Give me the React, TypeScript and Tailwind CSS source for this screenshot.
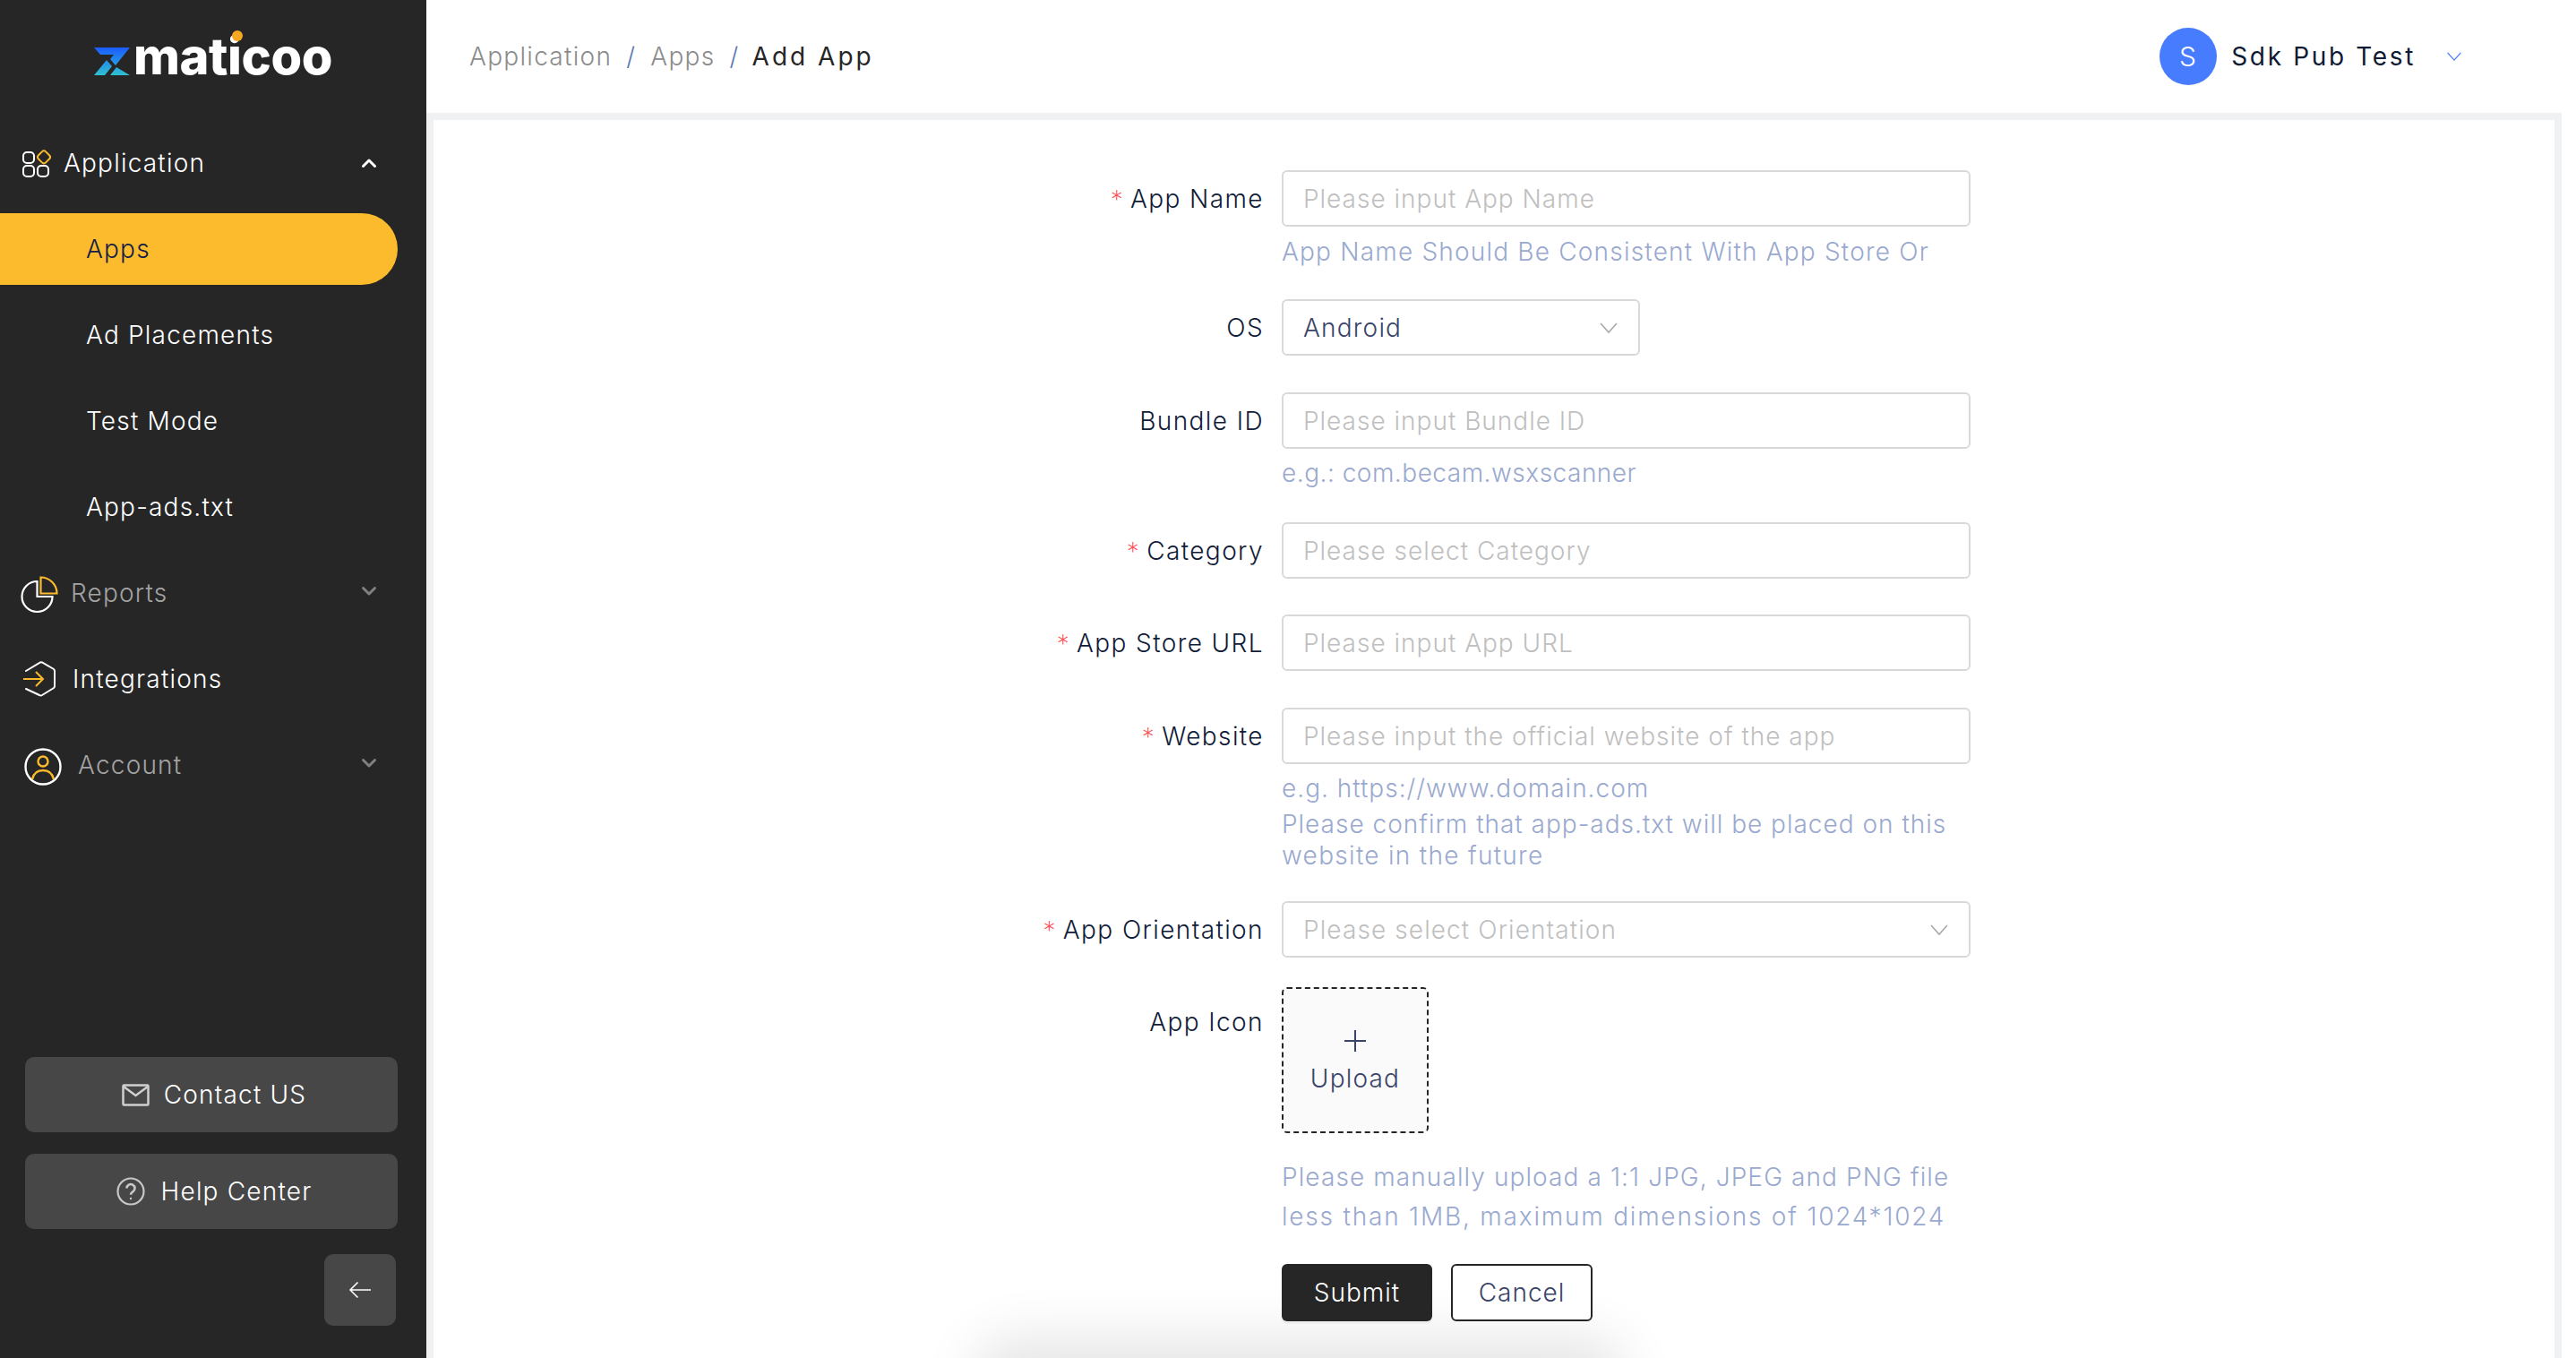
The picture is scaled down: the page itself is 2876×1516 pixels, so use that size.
import React from 'react'

const rowText = "text-[28px] tracking-[1.2px]"

function Chevron({ up, color }: { up?: boolean; color: string }) {
    return (
        <svg width="18" height="14" viewBox="0 0 18 14" fill="none" stroke={color} strokeWidth="3" strokeLinecap="round" strokeLinejoin="round">
            {up ? <path d="M2.5 10.5 9 4l6.5 6.5" /> : <path d="M2.5 3.5 9 10l6.5-6.5" />}
        </svg>
    )
}

function ThinChevron({ color, w = 22, h = 14 }: { color: string; w?: number; h?: number }) {
    return (
        <svg width={w} height={h} viewBox="0 0 22 14" fill="none" stroke={color} strokeWidth="1.6">
            <path d="M2 2l9 10 9-10" />
        </svg>
    )
}

function Logo() {
    return (
        <div className="h-[126px] flex items-center pl-[105px]">
            <svg width="40" height="31" viewBox="0 0 40 31" className="mt-[11px] shrink-0">
                <defs>
                    <linearGradient id="zg" x1="0" y1="0" x2="0" y2="1">
                        <stop offset="0" stopColor="#1a5cff" />
                        <stop offset="1" stopColor="#2fc0d0" />
                    </linearGradient>
                </defs>
                <path d="M0 0h40L24 20l-6-7 4-5H7zM0 31l14-17 6 7-8 10zM18 31l7-9 15 9z" fill="url(#zg)" />
            </svg>
            <div className="relative ml-[4px] text-[56px] leading-none font-extrabold tracking-[-0.4px] text-white">
                maticoo
                <span className="absolute left-[110px] top-[-1px] w-[12px] h-[12px] rounded-full bg-[#f7a823]" />
            </div>
        </div>
    )
}

function NavRow({ icon, label, dim, chevron, gap }: { icon: React.ReactNode; label: string; dim?: boolean; chevron?: 'up' | 'down'; gap: string }) {
    return (
        <div className="h-[96px] flex items-center relative">
            {icon}
            <span className={`${rowText} ${gap} ${dim ? 'text-[#a3a3a3]' : 'text-white'} font-light`}>{label}</span>
            {chevron && (
                <span className={`absolute left-[403px] ${chevron === 'up' ? 'top-[41px]' : 'top-[39px]'}`}>
                    <Chevron up={chevron === 'up'} color={chevron === 'up' ? '#ffffff' : '#808080'} />
                </span>
            )}
        </div>
    )
}

function SubRow({ label, active }: { label: string; active?: boolean }) {
    return (
        <div className={`h-[80px] mr-8 mb-4 pl-[96px] flex items-center rounded-r-[40px] font-light ${rowText} ${active ? 'bg-[#fbbb2c] text-[#141c47]' : 'text-white'}`}>
            {label}
        </div>
    )
}

function Sidebar() {
    return (
        <aside className="w-[476px] shrink-0 h-full bg-[#262626] flex flex-col">
            <Logo />
            <div className="h-[112px] flex flex-col justify-center">
                <NavRow
                    gap="ml-[14px]"
                    chevron="up"
                    label="Application"
                    icon={
                        <svg width="32" height="32" viewBox="0 0 32 32" fill="none" strokeWidth="2" className="ml-[25px] -mt-[1px]">
                            <rect x="1" y="4" width="12" height="12" rx="4" stroke="#fff" />
                            <rect x="1" y="19" width="12" height="12" rx="4" stroke="#fff" />
                            <rect x="17" y="19" width="12" height="12" rx="4" stroke="#fff" />
                            <rect x="18.5" y="3.5" width="11.5" height="11.5" rx="3" stroke="#fbbb2c" transform="rotate(45 24 9)" />
                        </svg>
                    }
                />
            </div>
            <SubRow label="Apps" active />
            <SubRow label="Ad Placements" />
            <SubRow label="Test Mode" />
            <SubRow label="App-ads.txt" />
            <div className="-mt-[8px]">
                <NavRow
                    gap="ml-[14px]"
                    dim
                    chevron="down"
                    label="Reports"
                    icon={
                        <svg width="42" height="42" viewBox="0 0 42 42" fill="none" strokeWidth="2.2" className="ml-[23px] mt-[4px]">
                            <path d="M18.500 6A17 17 0 1 0 35.500 23H18.500z" stroke="#fff" />
                            <path d="M22.500 1.500a18 18 0 0 1 18 18H22.500z" stroke="#fbbb2c" />
                        </svg>
                    }
                />
                <NavRow
                    gap="ml-[18px]"
                    label="Integrations"
                    icon={
                        <svg width="38" height="42" viewBox="0 0 38 42" fill="none" strokeWidth="2" className="ml-[25px]">
                            <path d="M4 12 20 2.5a3 3 0 0 1 2 0l13 7.5a3 3 0 0 1 1 2v17a3 3 0 0 1-1 2l-13 8a3 3 0 0 1-3 0L4 32" stroke="#fff" strokeLinecap="round" />
                            <path d="M1 21h21M15 13l8 8-8 8" stroke="#fbbb2c" />
                        </svg>
                    }
                />
                <NavRow
                    gap="ml-[18px]"
                    dim
                    chevron="down"
                    label="Account"
                    icon={
                        <svg width="42" height="42" viewBox="0 0 42 42" fill="none" strokeWidth="2.4" className="ml-[27px] mt-[3px]">
                            <circle cx="21" cy="21" r="19.5" stroke="#fff" />
                            <circle cx="21" cy="15" r="5.5" stroke="#fbbb2c" />
                            <path d="M9 35c1.5-7 6-10 12-10s10.500 3 12 10" stroke="#fbbb2c" />
                        </svg>
                    }
                />
            </div>
            <div className="mt-auto pl-7 pr-8 pb-9 flex flex-col">
                <button className="h-[84px] pl-[6px] rounded-[10px] bg-[#474747] flex items-center justify-center gap-[16px] text-white font-light text-[28px] tracking-[1.2px]">
                    <svg width="31" height="25" viewBox="0 0 31 25" fill="none" stroke="#d0d0d0" strokeWidth="2.5">
                        <rect x="1.500" y="1.500" width="28" height="22" rx="1" />
                        <path d="M2 3l13.500 10L29 3" />
                    </svg>
                    Contact US
                </button>
                <button className="mt-6 h-[84px] pl-[6px] rounded-[10px] bg-[#474747] flex items-center justify-center gap-[18px] text-white font-light text-[28px] tracking-[1.2px]">
                    <svg width="32" height="32" viewBox="0 0 32 32" fill="none" stroke="#c8c8c8" strokeWidth="2.200">
                        <circle cx="16" cy="16" r="14.500" />
                        <path d="M11.500 12.500a4.500 4.500 0 1 1 6.800 3.900c-1.500.9-2.300 1.700-2.300 3.300" strokeWidth="2.600" />
                        <circle cx="16" cy="24" r="1.200" fill="#c8c8c8" stroke="none" />
                    </svg>
                    Help Center
                </button>
                <button className="mt-7 self-end mr-[2px] w-20 h-20 rounded-[10px] bg-[#474747] flex items-center justify-center">
                    <svg width="26" height="20" viewBox="0 0 26 20" fill="none" stroke="#fff" strokeWidth="1.600">
                        <path d="M25 10H2M10.500 1.500 2 10l8.500 8.500" />
                    </svg>
                </button>
            </div>
        </aside>
    )
}

function Header() {
    return (
        <header className="h-[126px] shrink-0 flex items-center pl-[48px] pr-[127px] text-[28px] tracking-[1.3px]">
            <span className="font-light text-[#8c8c8c]">Application</span>
            <span className="mx-[16px] font-light text-[#5a78b0]">/</span>
            <span className="font-light text-[#8c8c8c]">Apps</span>
            <span className="mx-[16px] font-light text-[#5a78b0]">/</span>
            <span className="text-[#262626] tracking-[3px] -ml-[2px]">Add App</span>
            <div className="ml-auto flex items-center">
                <div className="w-16 h-16 rounded-full bg-[#477cff] text-white flex items-center justify-center font-light text-[30px]">S</div>
                <span className="ml-4 text-[#0f1a33] tracking-[2.650px]">Sdk Pub Test</span>
                <span className="ml-[34px]"><ThinChevron color="#477cff" w={18} h={12} /></span>
            </div>
        </header>
    )
}

function Label({ text, required, tall }: { text: string; required?: boolean; tall?: boolean }) {
    return (
        <div className={`w-[400px] shrink-0 pr-[20px] flex justify-end text-[28px] font-light text-[#111c38] ${tall ? 'pt-[18px]' : 'h-[63px] items-center'} tracking-[1.400px]`}>
            {required && <span className="text-[#ff4d4f] mr-[7px] mt-[2px] font-extralight">*</span>}
            {text}
        </div>
    )
}

function TextInput({ placeholder }: { placeholder: string }) {
    return (
        <input
            readOnly
            placeholder={placeholder}
            className="w-[769px] h-[63px] px-[22px] rounded-[6px] border-2 border-[#d9d9d9] bg-white text-[28px] font-light tracking-[1px] outline-none placeholder:text-[#bfbfbf]"
        />
    )
}

function Hint({ lines, className, track = 'tracking-[1.1px]' }: { lines: string[]; className: string; track?: string }) {
    return (
        <div className={`text-[28px] font-light text-[#9aa9cf] ${track} ${className}`}>
            {lines.map(l => <div key={l}>{l}</div>)}
        </div>
    )
}

function Form() {
    return (
        <div className="relative z-20 pt-[56px] pl-[547px] flex flex-col">
            <div className="flex mb-[35px]">
                <Label text="App Name" required />
                <div>
                    <TextInput placeholder="Please input App Name" />
                    <Hint className="mt-[10px] leading-[36px]" track="tracking-[1.2px]" lines={["App Name Should Be Consistent With App Store Or"]} />
                </div>
            </div>
            <div className="flex mb-[41px]">
                <Label text="OS" />
                <div className="w-[400px] h-[63px] pl-[22px] pr-[22px] rounded-[6px] border-2 border-[#d9d9d9] flex items-center justify-between text-[28px] font-light tracking-[1.2px] text-[#3a4468]">
                    Android
                    <ThinChevron color="#a8a8a8" />
                </div>
            </div>
            <div className="flex mb-[37px]">
                <Label text="Bundle ID" />
                <div>
                    <TextInput placeholder="Please input Bundle ID" />
                    <Hint className="mt-[9px] leading-[36px]" track="tracking-[0.5px]" lines={["e.g.: com.becam.wsxscanner"]} />
                </div>
            </div>
            <div className="flex mb-[40px]">
                <Label text="Category" required />
                <TextInput placeholder="Please select Category" />
            </div>
            <div className="flex mb-[41px]">
                <Label text="App Store URL" required />
                <TextInput placeholder="Please input App URL" />
            </div>
            <div className="flex mb-[33px]">
                <Label text="Website" required />
                <div>
                    <TextInput placeholder="Please input the official website of the app" />
                    <Hint className="mt-[9px] leading-[36px]" track="tracking-[1px]" lines={["e.g. https://www.domain.com"]} />
                    <Hint className="mt-[5px] leading-[35px]" track="tracking-[1px]" lines={["Please confirm that app-ads.txt will be placed on this"]} />
                    <Hint className="leading-[35px]" track="tracking-[1.3px]" lines={["website in the future"]} />
                </div>
            </div>
            <div className="flex mb-[33px]">
                <Label text="App Orientation" required />
                <div className="w-[769px] h-[63px] pl-[22px] pr-[22px] rounded-[6px] border-2 border-[#d9d9d9] flex items-center justify-between text-[28px] font-light tracking-[1.1px] text-[#bfbfbf]">
                    Please select Orientation
                    <ThinChevron color="#a8a8a8" />
                </div>
            </div>
            <div className="flex mb-[31px]">
                <Label text="App Icon" tall />
                <div>
                    <div className="w-[164px] h-[163px] rounded-[6px] border-2 border-dashed border-[#262626] bg-[#fafafa] flex flex-col items-center justify-center text-[28px] font-light tracking-[1.200px] text-[#3a4468]">
                        <svg width="24" height="24" viewBox="0 0 24 24" stroke="#3a4468" strokeWidth="2" className="mt-1">
                            <path d="M12 0v24M0 12h24" />
                        </svg>
                        <span className="mt-[12px] leading-[36px]">Upload</span>
                    </div>
                    <Hint className="mt-[27px] leading-[44px]" track="tracking-[1.100px]" lines={["Please manually upload a 1:1 JPG, JPEG and PNG file"]} />
                    <Hint className="leading-[44px]" track="tracking-[1.800px]" lines={["less than 1MB, maximum dimensions of 1024*1024"]} />
                </div>
            </div>
            <div className="flex">
                <div className="w-[400px] shrink-0" />
                <button className="w-[168px] h-[64px] rounded-[6px] bg-[#262626] text-white text-[28px] font-light tracking-[1px] shadow-[0_3px_0_#eeeeee]">Submit</button>
                <button className="ml-[21px] w-[158px] h-[64px] rounded-[6px] border-2 border-[#262626] bg-white text-[#3a4468] text-[28px] font-light tracking-[1px]">Cancel</button>
            </div>
        </div>
    )
}

export default function App() {
    return (
        <div className="w-[2876px] h-[1516px] flex overflow-hidden bg-white font-['Inter',sans-serif]">
            <Sidebar />
            <main className="flex-1 min-w-0 flex flex-col relative overflow-hidden">
                <Header />
                <div className="flex-1 min-h-0 mr-4 pt-2 px-2 bg-[#f0f1f3]">
                    <div className="h-full bg-white">
                        <Form />
                    </div>
                </div>
                {/* soft shadow coming up from below the fold */}
                <div className="absolute left-[640px] right-[1090px] bottom-[-46px] h-[40px] rounded-full bg-[#e6e6e6] shadow-[0_0_60px_30px_#e6e6e6] z-10" />
            </main>
        </div>
    )
}
